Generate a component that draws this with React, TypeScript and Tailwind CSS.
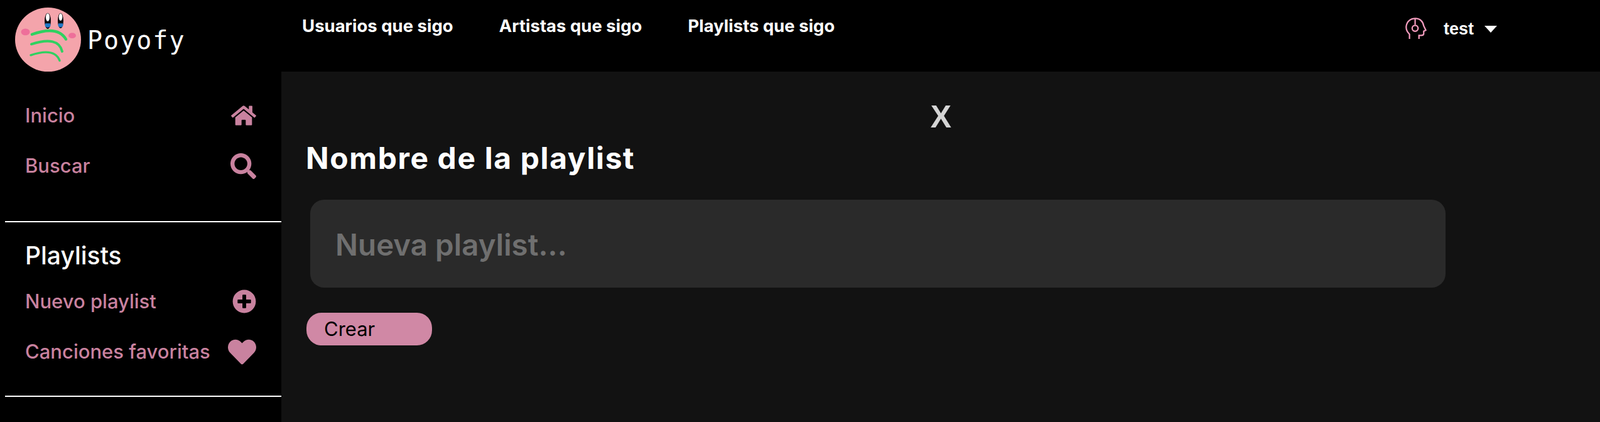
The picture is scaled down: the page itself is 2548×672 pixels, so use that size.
import { FaHome, FaSearch, FaPlusCircle, FaHeart } from 'react-icons/fa';

const sans = "font-['Inter',sans-serif]";

function KirbyLogo() {
  return (
    <svg width="106" height="103" viewBox="0 0 106 106" preserveAspectRatio="none" className="shrink-0">
      <circle cx="52.5" cy="52.5" r="52.5" fill="#f4a4ab" />
      <ellipse cx="16.5" cy="40" rx="7" ry="5.5" fill="#ee6f9a" />
      <ellipse cx="91" cy="46" rx="6" ry="4.5" fill="#ee6f9a" />
      <ellipse cx="52" cy="22" rx="5" ry="13" fill="#0c0c10" />
      <ellipse cx="72.5" cy="21.5" rx="4.5" ry="12.5" fill="#0c0c10" />
      <path d="M47.5 30 Q52 36 56.500 30 L56 26 L48 26 Z" fill="#1f78c8" />
      <path d="M68.500 30 Q72.500 35 76.500 30 L76 26 L69 26 Z" fill="#1f78c8" />
      <ellipse cx="52" cy="16" rx="3" ry="6.500" fill="#fff" />
      <ellipse cx="72.500" cy="15.500" rx="2.800" ry="6" fill="#fff" />
      <g fill="none" stroke="#2fd160" strokeLinecap="round">
        <path d="M27 44 Q68 29 81 52" strokeWidth="4.500" />
        <path d="M26 60 Q69 46 75 72" strokeWidth="4" />
        <path d="M25 78 Q63 65 71 87" strokeWidth="3.500" />
      </g>
    </svg>
  );
}

function HeadIcon() {
  return (
    <svg width="34" height="36" viewBox="0 0 36 38" fill="none" stroke="#f29bbd" strokeWidth="2.400" className="shrink-0">
      <path d="M7 36 V28 C3 24 1 20 1.500 15 C2.500 6 9 1.500 17 1.500 C25 1.500 30 7 31 14 L34.500 21 L31 23 V27 C31 29 29 30 27 30 H23 V36" />
      <path d="M16.500 2 V12" />
      <circle cx="16.500" cy="18" r="5" />
    </svg>
  );
}

function NavRow({ label, icon }: { label: string; icon: React.ReactNode }) {
  return (
    <div className="flex h-[40px] items-center justify-between">
      <span className="text-[31px] font-medium text-[#c9829f]">{label}</span>
      {icon}
    </div>
  );
}

export default function App() {
  return (
    <div className={`flex h-[672px] w-[2548px] overflow-hidden bg-black ${sans}`}>
      <aside className="w-[448px] shrink-0 pl-[8px]">
        <div className="flex h-[114px] items-start pl-[16px] pt-[12px]">
          <KirbyLogo />
          <span className="ml-[9px] mt-[28px] font-['DejaVu_Sans_Mono',monospace] text-[40px] leading-[48px] tracking-[2px] text-white">
            Poyofy
          </span>
        </div>
        <div className="flex flex-col gap-[40px] pl-[32px] pr-[40px] pt-[50px]">
          <NavRow label="Inicio" icon={<FaHome className="text-[40px] text-[#c9829f]" />} />
          <NavRow label="Buscar" icon={<FaSearch className="text-[41px] text-[#c9829f]" />} />
        </div>
        <div className="mt-[68px] border-t-2 border-white pl-[32px] pr-[40px] pt-[31px]">
          <h2 className="text-[39px] font-medium leading-[44px] text-white">Playlists</h2>
          <div className="mt-[31px] flex flex-col gap-[40px]">
            <NavRow label="Nuevo playlist" icon={<FaPlusCircle className="text-[38px] text-[#c9829f]" />} />
            <NavRow label="Canciones favoritas" icon={<FaHeart className="text-[45px] text-[#c9829f]" />} />
          </div>
        </div>
        <div className="mt-[50px] border-t-2 border-white" />
      </aside>

      <div className="flex min-w-0 flex-1 flex-col">
        <header className="flex h-[114px] shrink-0 items-start pl-[33px] pr-[164px]">
          <nav className="flex gap-[73px] pt-[25px] text-[27.5px] font-bold leading-[32px] text-white">
            <span>Usuarios que sigo</span>
            <span>Artistas que sigo</span>
            <span>Playlists que sigo</span>
          </nav>
          <div className="ml-auto flex items-center pt-[28px]">
            <HeadIcon />
            <span className="ml-[27px] font-['Liberation_Sans',sans-serif] text-[27px] font-bold leading-[32px] text-white">test</span>
            <span className="ml-[17px] h-0 w-0 border-x-[10px] border-t-[11px] border-x-transparent border-t-white" />
          </div>
        </header>
        <main className="flex-1 bg-[#121212] pl-[40px]">
          <div className="pr-[39px] pt-[42px] text-center font-['Liberation_Sans',sans-serif] text-[50px] font-bold leading-[60px] text-[#d4d4d4]">
            X
          </div>
          <h1 className="-ml-[1px] mt-[7px] text-[48px] font-bold leading-[58px] tracking-[1.6px] text-white">Nombre de la playlist</h1>
          <input
            readOnly
            placeholder="Nueva playlist..."
            className="ml-[6px] mt-[37px] block h-[140px] w-[1808px] rounded-[22px] bg-[#2a2a2a] pl-[40px] pt-[3px] text-[47.5px] font-semibold text-white outline-none placeholder:text-[#6f6f6f]"
          />
          <button className="mt-[40px] block h-[52px] w-[200px] rounded-[24px] bg-[#d088a5] pl-[28px] text-left text-[31px] text-black">
            Crear
          </button>
        </main>
      </div>
    </div>
  );
}
